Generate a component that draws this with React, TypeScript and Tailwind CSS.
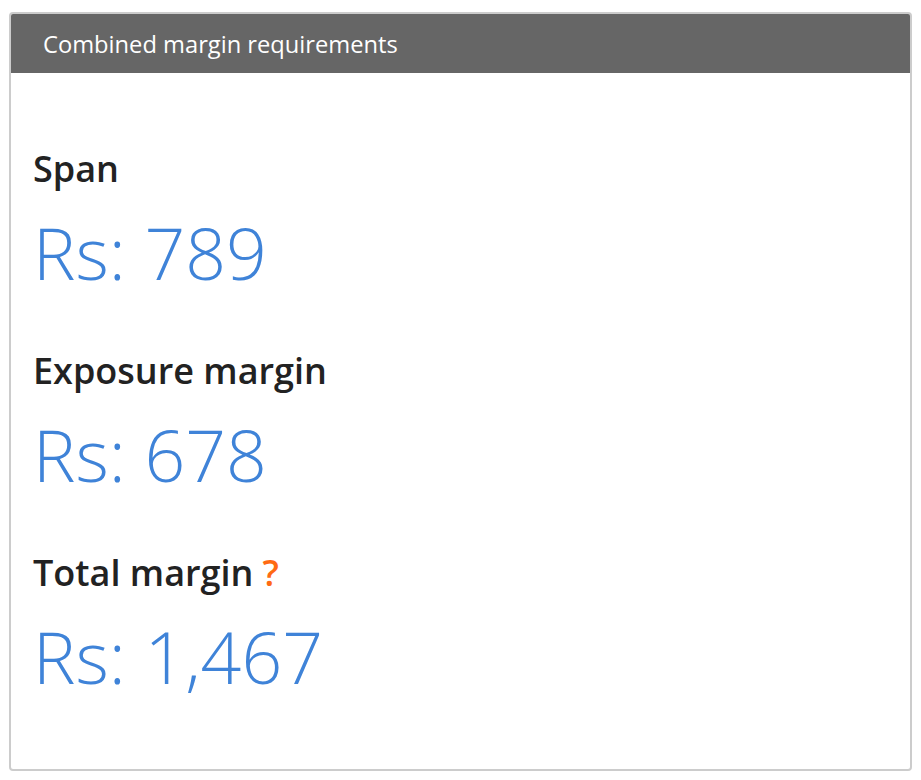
const items = [
  { label: "Span", value: "Rs: 789" },
  { label: "Exposure margin", value: "Rs: 678" },
  { label: "Total margin", value: "Rs: 1,467", help: true },
];

export default function App() {
  return (
    <div className="min-h-[780px] bg-white pt-[12px] pl-[9px] font-['Open_Sans',sans-serif]">
      <div className="w-[903px] h-[759px] rounded-[4px] border-2 border-[#cccccc] overflow-hidden">
        <div className="-mx-[2px] -mt-[2px] h-[61px] bg-[#666666] pl-[34px] pt-[16px] text-[23.7px] leading-[32px] text-white">
          Combined margin requirements
        </div>
        <div className="pl-[22px] pt-[74px] flex flex-col gap-[52px]">
          {items.map((it) => (
            <div key={it.label} className="flex flex-col gap-[18px]">
              <div className="text-[36px] leading-[44px] font-semibold text-[#222222]">
                {it.label}
                {it.help && <span className="ml-[9px] text-[#ff6a13]">?</span>}
              </div>
              <div className="text-[71.5px] leading-[88px] font-light text-[#3f83d8]">
                {it.value}
              </div>
            </div>
          ))}
        </div>
      </div>
    </div>
  );
}
